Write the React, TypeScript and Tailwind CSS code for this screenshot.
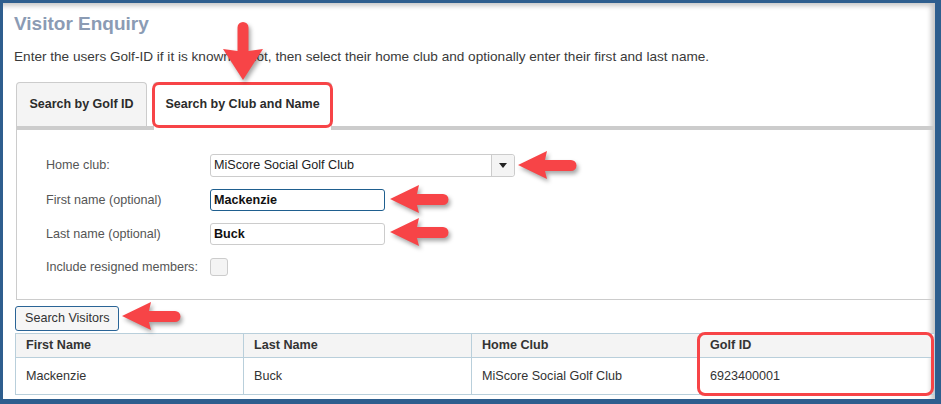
import React from "react";

const RED = "#f74447";

function LeftArrow({ className }: { className: string }) {
  return (
    <svg
      className={`absolute drop-shadow-[2px_3px_2px_rgba(0,0,0,0.35)] ${className}`}
      width="64"
      height="32"
      viewBox="0 0 64 32"
    >
      <path
        d="M2 16 L31 2 L29 11 L55 11 A5.5 5.5 0 0 1 55 22 L29 22 L31 30 Z"
        fill={RED}
      />
    </svg>
  );
}

function DownArrow({ className }: { className: string }) {
  return (
    <svg
      className={`absolute drop-shadow-[2px_3px_2px_rgba(0,0,0,0.35)] ${className}`}
      width="44"
      height="62"
      viewBox="0 0 44 62"
    >
      <path
        d="M22 60 L2 29 L16.5 31 L16.5 7.5 A5.5 5.5 0 0 1 27.5 7.5 L27.5 31 L42 29 Z"
        fill={RED}
      />
    </svg>
  );
}

const rows = [
  {
    first: "Mackenzie",
    last: "Buck",
    club: "MiScore Social Golf Club",
    golfId: "6923400001",
  },
];

export default function App() {
  return (
    <div className="relative w-[941px] h-[404px] bg-[#2e5e8e] pt-[3px] pl-[3px] pr-[6px] pb-[5px] font-['Liberation_Sans',Arial,sans-serif]">
      <div className="h-full bg-white shadow-[inset_-6px_5px_5px_-2px_rgba(0,0,0,0.22)] pl-[12px] pr-[1px] pt-[9px]">
        <h1 className="text-[19px] leading-[23px] font-bold text-[#8b9bb4] -ml-[1px]">
          Visitor Enquiry
        </h1>
        <p className="mt-[14px] text-[13.6px] leading-[16px] text-[#3a3a3a] -ml-[1px]">
          Enter the users Golf-ID if it is known, if not, then select their home
          club and optionally enter their first and last name.
        </p>

        {/* tabs */}
        <div className="mt-[17px] ml-[1px] flex items-start h-[48px] border-b-4 border-[#cccccc]">
          <div className="w-[131px] h-[44px] flex items-center justify-center bg-[#f4f4f4] border border-b-0 border-[#cccccc] rounded-t-[4px] text-[12.5px] font-bold text-[#2b2b2b]">
            Search by Golf ID
          </div>
          <div className="ml-[6px] w-[179px] h-[48px] pb-[4px] flex items-center justify-center bg-white border border-b-0 border-[#cccccc] rounded-t-[4px] text-[12.5px] font-bold text-[#2b2b2b]">
            Search by Club and Name
          </div>
        </div>

        {/* form panel */}
        <div className="ml-[1px] border border-t-0 border-[#cccccc] pl-[29px] pt-[24px] pb-[23px] text-[12.6px] text-[#555555]">
          <div className="flex items-center h-[23px]">
            <span className="w-[164px]">Home club:</span>
            <div className="flex w-[305px] h-[23px] border border-[#cccccc] rounded-[3px]">
              <span className="flex-1 pl-[3px] leading-[21px] text-[#222222]">
                MiScore Social Golf Club
              </span>
              <span className="w-[23px] flex items-center justify-center border-l border-[#cccccc] bg-[#f4f4f4] rounded-r-[3px]">
                <span className="w-0 h-0 border-l-[4px] border-r-[4px] border-t-[5px] border-l-transparent border-r-transparent border-t-[#222222]" />
              </span>
            </div>
          </div>
          <div className="flex items-center h-[22px] mt-[12px]">
            <span className="w-[164px]">First name (optional)</span>
            <div className="w-[175px] h-[22px] border border-[#1f5f8f] rounded-[3px] pl-[3px] leading-[20px] font-bold text-[#111111]">
              Mackenzie
            </div>
          </div>
          <div className="flex items-center h-[22px] mt-[12px]">
            <span className="w-[164px]">Last name (optional)</span>
            <div className="w-[175px] h-[22px] border border-[#cccccc] rounded-[3px] pl-[3px] leading-[20px] font-bold text-[#111111]">
              Buck
            </div>
          </div>
          <div className="flex items-center h-[18px] mt-[13px]">
            <span className="w-[164px]">Include resigned members:</span>
            <div className="w-[18px] h-[18px] border border-[#cccccc] rounded-[3px] bg-[#f4f4f4]" />
          </div>
        </div>

        <button className="mt-[6px] h-[25px] px-[9px] border border-[#2a6496] rounded-[3px] bg-[#f6f6f6] text-[12.6px] text-[#333333]">
          Search Visitors
        </button>

        <table className="mt-[2px] w-full table-fixed border-collapse text-[12.6px] text-[#333333]">
          <thead>
            <tr className="bg-[#f4f4f4] h-[24px]">
              {["First Name", "Last Name", "Home Club", "Golf ID"].map((h, i) => (
                <th
                  key={h}
                  className={`border border-[#b9cfdb] pl-[10px] text-left font-bold ${
                    i === 3 ? "w-[235px]" : "w-[228px]"
                  }`}
                >
                  {h}
                </th>
              ))}
            </tr>
          </thead>
          <tbody>
            {rows.map((r) => (
              <tr key={r.golfId} className="h-[37px]">
                <td className="border border-[#b9cfdb] pl-[10px]">{r.first}</td>
                <td className="border border-[#b9cfdb] pl-[10px]">{r.last}</td>
                <td className="border border-[#b9cfdb] pl-[10px]">{r.club}</td>
                <td className="border border-[#b9cfdb] pl-[10px]">{r.golfId}</td>
              </tr>
            ))}
          </tbody>
        </table>
      </div>

      {/* annotations */}
      <div className="absolute left-[152px] top-[82px] w-[181px] h-[46px] border-[3px] border-[#f74447] rounded-[7px]" />
      <div className="absolute left-[697px] top-[332px] w-[237px] h-[64px] border-[3px] border-[#f74447] rounded-[8px]" />
      <DownArrow className="left-[221px] top-[20px]" />
      <LeftArrow className="left-[516px] top-[149px]" />
      <LeftArrow className="left-[388px] top-[183px]" />
      <LeftArrow className="left-[388px] top-[216px]" />
      <LeftArrow className="left-[120px] top-[300px]" />
    </div>
  );
}
